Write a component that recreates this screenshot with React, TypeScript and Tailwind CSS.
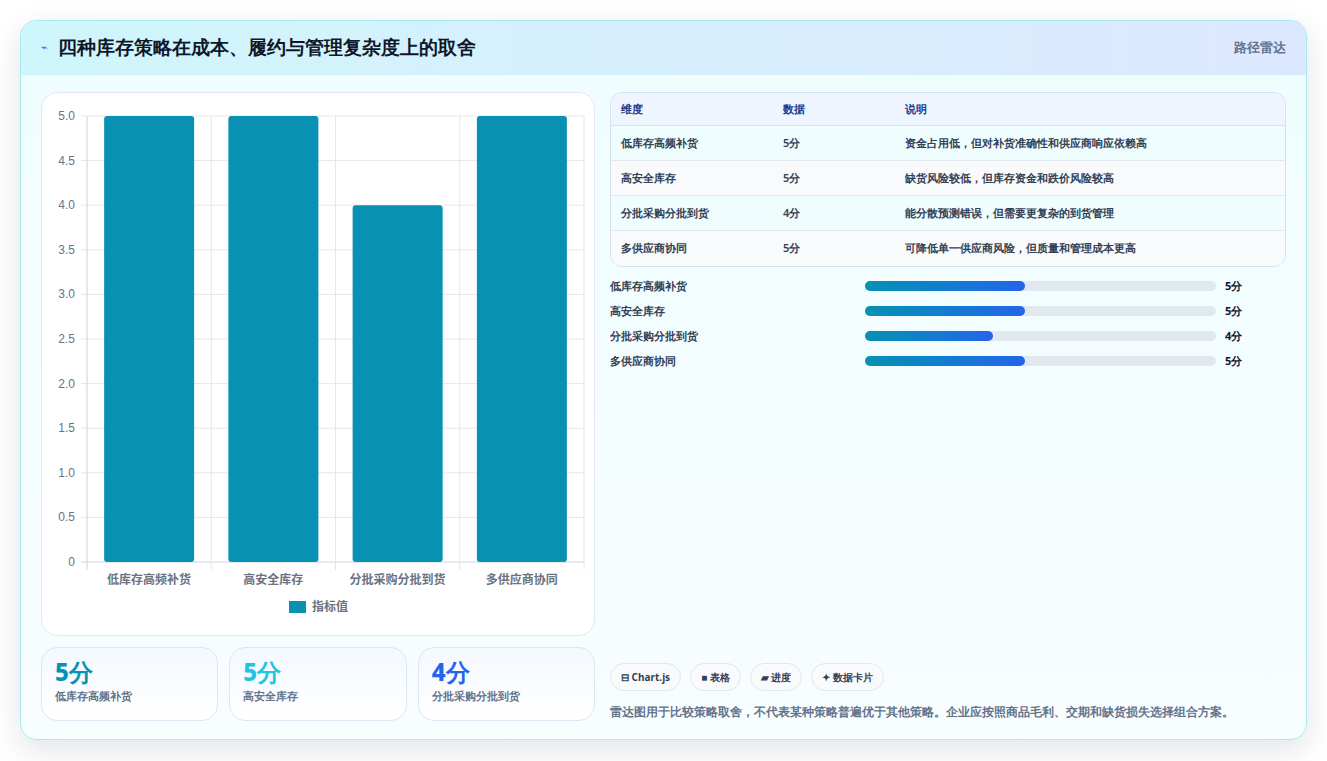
const rows = [
  { name: "低库存高频补货", value: 5, note: "资金占用低，但对补货准确性和供应商响应依赖高" },
  { name: "高安全库存", value: 5, note: "缺货风险较低，但库存资金和跌价风险较高" },
  { name: "分批采购分批到货", value: 4, note: "能分散预测错误，但需要更复杂的到货管理" },
  { name: "多供应商协同", value: 5, note: "可降低单一供应商风险，但质量和管理成本更高" },
];

function BarChart() {
  const left = 85;
  const right = 582;
  const top = 116;
  const bottom = 562;
  const ticks = [0, 0.5, 1, 1.5, 2, 2.5, 3, 3.5, 4, 4.5, 5];
  const y = (v: number) => bottom - (v / 5) * (bottom - top);
  const step = (right - left) / 4;
  return (
    <svg width="554" height="543" viewBox="40 93 554 543" className="block">
      {ticks.map((t) => (
        <g key={t}>
          <line x1={left - 6} x2={right} y1={y(t)} y2={y(t)} stroke={t === 0 ? "#cbd5e1" : "#e5e7eb"} />
          <text x={left - 12} y={y(t) + 4} textAnchor="end" fontSize="12" fill="#6b7280" fontFamily="Liberation Sans, sans-serif">
            {t === 0 ? "0" : t.toFixed(1)}
          </text>
        </g>
      ))}
      {[0, 1, 2, 3, 4].map((i) => (
        <line key={i} x1={left + i * step} x2={left + i * step} y1={top} y2={bottom + 8} stroke={i === 0 ? "#cbd5e1" : "#e5e7eb"} />
      ))}
      {rows.map((r, i) => {
        const cx = left + step * i + step / 2;
        return (
          <g key={r.name}>
            <rect x={cx - 45} y={y(r.value)} width="90" height={bottom - y(r.value)} rx="3" fill="#0891b2" />
            <text x={cx} y="584" textAnchor="middle" fontSize="12" fontWeight="600" fill="#6b7280" fontFamily="Noto Sans CJK SC, sans-serif">
              {r.name}
            </text>
          </g>
        );
      })}
      <rect x="287" y="601" width="17" height="12" fill="#0891b2" />
      <text x="310" y="611" fontSize="12" fontWeight="600" fill="#6b7280" fontFamily="Noto Sans CJK SC, sans-serif">指标值</text>
    </svg>
  );
}

export default function App() {
  return (
    <div className="min-h-screen bg-white p-5 font-['Noto_Sans_CJK_SC',sans-serif]">
      <div className="flex h-[720px] w-[1287px] flex-col overflow-hidden rounded-2xl border border-[#a5e9f3] bg-gradient-to-b from-[#effdff] to-[#f8fdff] shadow-[0_10px_30px_rgba(15,23,42,0.12)]">
        <div className="flex h-[55px] items-center justify-between border-b border-[#cfeef5] bg-gradient-to-r from-[#cff6fc] to-[#dde8ff] px-5">
          <div className="flex items-center gap-2.5">
            <span className="text-[11px] text-[#2563eb]">⌁</span>
            <h1 className="text-[19px] font-bold text-[#0f172a]">四种库存策略在成本、履约与管理复杂度上的取舍</h1>
          </div>
          <span className="text-[13px] font-semibold text-[#64748b]">路径雷达</span>
        </div>
        <div className="flex flex-1 gap-[15px] px-5 pb-[18px] pt-[17px]">
          <div className="flex w-[554px] flex-col gap-[11px]">
            <div className="h-[544px] rounded-2xl border border-[#e2e8f0] bg-white">
              <BarChart />
            </div>
            <div className="grid grid-cols-3 gap-[11px]">
              {[
                { v: "5分", l: "低库存高频补货", c: "text-[#0891b2]" },
                { v: "5分", l: "高安全库存", c: "text-[#22c5e0]" },
                { v: "4分", l: "分批采购分批到货", c: "text-[#2563eb]" },
              ].map((s) => (
                <div key={s.l} className="h-[74px] rounded-2xl border border-[#dbe7f3] bg-gradient-to-b from-[#f4f9ff] to-white px-[13px] pt-2">
                  <div className={`text-[24px] font-extrabold leading-8 ${s.c}`}>{s.v}</div>
                  <div className="text-[11px] font-semibold text-[#64748b]">{s.l}</div>
                </div>
              ))}
            </div>
          </div>
          <div className="flex flex-1 flex-col">
            <div className="overflow-hidden rounded-xl border border-[#d6e1ee]">
              <div className="grid h-[33px] grid-cols-[162px_122px_1fr] items-center border-b border-[#d6e1ee] bg-[#eef5ff] px-[10px] text-[11px] font-bold text-[#1e3a8a]">
                <span>维度</span><span>数据</span><span>说明</span>
              </div>
              {rows.map((r, i) => (
                <div key={r.name} className={`grid h-[35px] grid-cols-[162px_122px_1fr] items-center px-[10px] text-[11px] font-semibold text-[#334155] ${i < 3 ? "border-b border-[#e2e8f0]" : ""} ${i % 2 === 0 ? "bg-[#effdff]" : "bg-[#f8fafc]"}`}>
                  <span>{r.name}</span><span>{r.value}分</span><span>{r.note}</span>
                </div>
              ))}
            </div>
            <div className="mt-[10px] flex flex-col gap-[7px]">
              {rows.map((r) => (
                <div key={r.name} className="flex h-[18px] items-center text-[11px] font-semibold text-[#334155]">
                  <span className="w-[255px]">{r.name}</span>
                  <div className="h-[10px] w-[351px] rounded-full bg-[#e2e8f0]">
                    <div className="h-full rounded-full bg-gradient-to-r from-[#0891b2] to-[#2563eb]" style={{ width: `${(r.value / 11) * 100}%` }} />
                  </div>
                  <span className="ml-[9px] font-bold text-[#0f172a]">{r.value}分</span>
                </div>
              ))}
            </div>
            <div className="mt-auto flex gap-[9px]">
              {["⊟ Chart.js", "■ 表格", "▰ 进度", "✦ 数据卡片"].map((c) => (
                <span key={c} className="flex h-[28px] items-center rounded-full border border-[#e2e8f0] bg-[#f8fafc] px-[10px] text-[10px] font-bold text-[#334155]">{c}</span>
              ))}
            </div>
            <p className="mt-[12px] text-[12px] font-semibold text-[#64748b]">雷达图用于比较策略取舍，不代表某种策略普遍优于其他策略。企业应按照商品毛利、交期和缺货损失选择组合方案。</p>
          </div>
        </div>
      </div>
    </div>
  );
}
